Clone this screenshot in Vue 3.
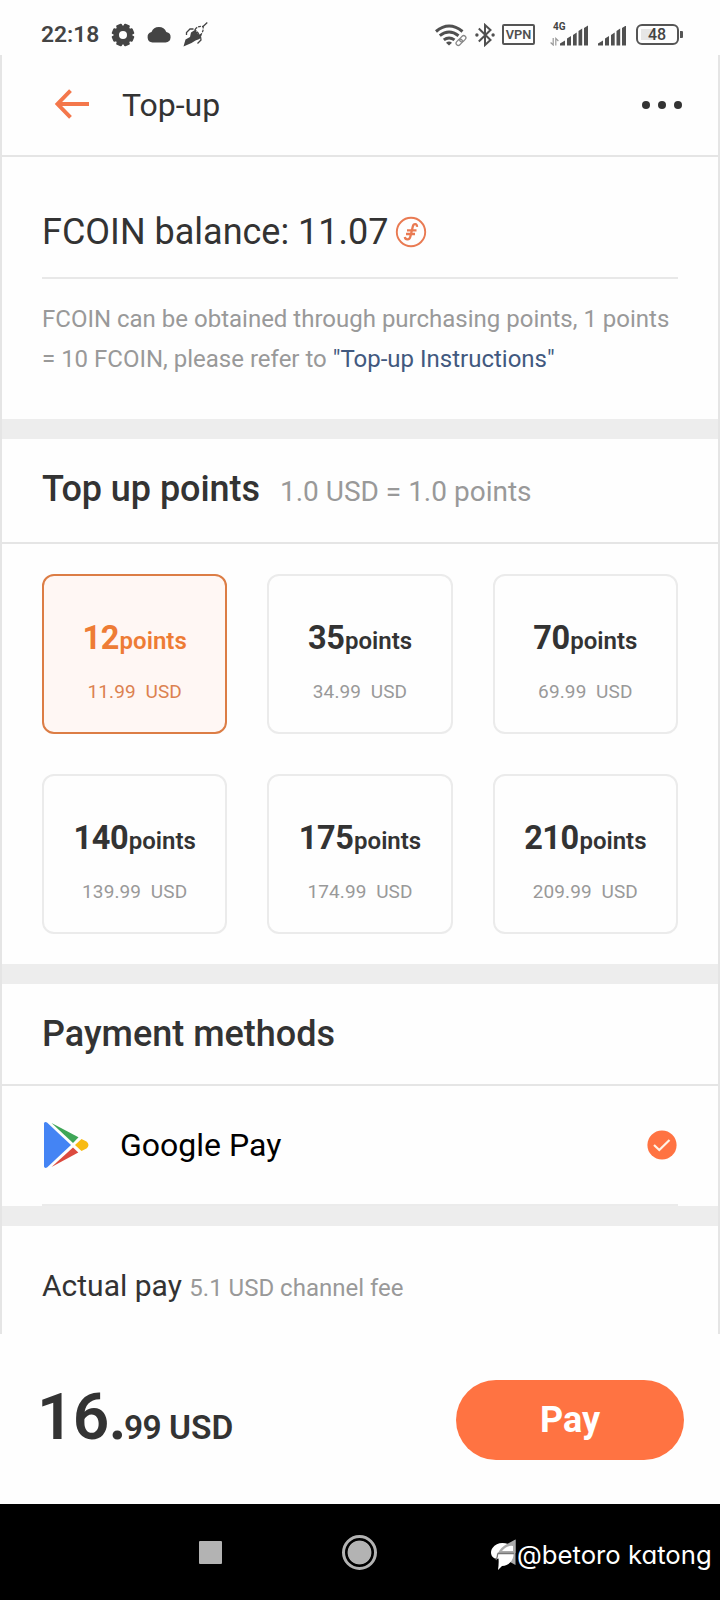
<script setup>
import { ref } from 'vue'

const packs = [
  { points: 12, price: '11.99' },
  { points: 35, price: '34.99' },
  { points: 70, price: '69.99' },
  { points: 140, price: '139.99' },
  { points: 175, price: '174.99' },
  { points: 210, price: '209.99' },
]
const selected = ref(12)
const teeth = [0, 45, 90, 135, 180, 225, 270, 315]
</script>

<template>
  <div class="screen">
    <div class="status">
      <span class="clock">22:18</span>
      <svg class="gear" width="24" height="24" viewBox="-12 -12 24 24">
        <rect v-for="a in teeth" :key="a" x="-3.1" y="-11.3" width="6.2" height="6" rx="1.2" :transform="`rotate(${a + 22.5})`" fill="#444" />
        <circle r="6.700" fill="none" stroke="#444" stroke-width="5.400" />
      </svg>
      <svg class="cloud" width="24" height="17" viewBox="0 0 24 17">
        <path d="M5.500 16.500a5.300 5.300 0 0 1-1-10.400A8 8 0 0 1 19.300 6a5.300 5.300 0 0 1-.8 10.500z" fill="#444" />
      </svg>
      <svg class="rocket" width="25" height="25" viewBox="0 0 25 25">
        <path d="M.5 24.500 2.500 17.500 7 15 8 10.500 12.500 7.500 15 12 19 12.500 16.500 17 12.500 18.500 8.500 21z" fill="#444" />
        <path d="M12 7.500Q15 3.500 20 4.500Q21 9 17.500 13L15.500 11.500z" fill="#fff" stroke="#444" stroke-width="1.200" stroke-dasharray="3 1" />
        <path d="M19.500 5 24.300.5M10.500 7H7L3.500 10.500V13M17.500 14.500 18 18 14.500 21.500" fill="none" stroke="#444" stroke-width="1.300" />
      </svg>
      <span class="spacer"></span>
      <svg class="wifi" width="33" height="24" viewBox="0 0 33 24">
        <g fill="none" stroke="#505050" stroke-width="3">
          <path d="M1 8.500Q14 -2.500 27.500 8.500" />
          <path d="M4.800 12.700Q14 5.300 23.500 12.700" />
          <path d="M8.800 16.900Q14 13 19.500 16.900" />
        </g>
        <path d="M11 19.700Q14 17.500 17 19.700L14 22.600z" fill="#505050" />
        <g transform="rotate(-45 26 17.500)" fill="none" stroke="#fff" stroke-width="3"><rect x="20" y="15.200" width="12" height="4.800" rx="2.400" /></g>
        <g transform="rotate(-45 26 17.500)" fill="none" stroke="#888" stroke-width="1.300">
          <rect x="20" y="15.300" width="7" height="4.400" rx="2.200" />
          <rect x="25" y="15.300" width="7" height="4.400" rx="2.200" />
        </g>
      </svg>
      <svg class="bt" width="20" height="24" viewBox="0 0 20 24">
        <path d="M3.800 5.500 15.500 17 10 22V2L15.500 7 3.800 18.500" fill="none" stroke="#505050" stroke-width="2" />
        <circle cx="1.900" cy="12" r="1.700" fill="#505050" /><circle cx="18.100" cy="12" r="1.700" fill="#505050" />
      </svg>
      <span class="vpn">VPN</span>
      <span class="mobile">
        <span class="net">4G</span>
        <svg width="38" height="23" viewBox="0 0 38 23">
          <path d="M3.200 15V22L.6 19.500M5.800 22.500V15.500L8.400 18" fill="none" stroke="#999" stroke-width="1.200" />
          <path d="M10 22.500V20.500L15 17.500V22.500zM17 15.500l4-2.400v9.400h-4zM23 12l3.700-2.400v12.900H23zM28.500 8l3.700-2.400v16.900h-3.700zM34 5l4-2.500v20h-4z" fill="#505050" />
        </svg>
      </span>
      <svg class="sig" width="28" height="20" viewBox="10 3 28 20">
        <path d="M10 22.500V20.500L15 17.500V22.500zM17 15.500l4-2.400v9.400h-4zM23 12l3.700-2.400v12.900H23zM28.500 8l3.700-2.400v16.900h-3.700zM34 5l4-2.500v20h-4z" fill="#505050" />
      </svg>
      <span class="battery"><span>48</span></span>
      <i class="nub"></i>
    </div>

    <main class="page">
      <header class="bar">
        <svg width="36" height="32" viewBox="0 0 36 32">
          <path d="M16.500 2.700 3.500 16 16.500 29.300M3.500 16H35" fill="none" stroke="#f4774b" stroke-width="3.900" />
        </svg>
        <h1>Top-up</h1>
        <svg class="more" width="40" height="8" viewBox="0 0 40 8" fill="#333">
          <circle cx="4" cy="4" r="4" /><circle cx="20" cy="4" r="4" /><circle cx="36" cy="4" r="4" />
        </svg>
      </header>

      <section class="balance">
        <div class="amount">
          <span>FCOIN balance: 11.07</span>
          <svg width="32" height="32" viewBox="0 0 32 32" fill="none" stroke="#e97a52">
            <circle cx="16" cy="16" r="14.200" stroke-width="1.900" />
            <path d="M22 10.800C22.300 7.500 18.600 7.200 17.800 10.500L15.400 20.500C14.600 24 10.500 24.500 9.800 21M12 14.300H21.500M11 18H20" stroke-width="2.300" />
          </svg>
        </div>
        <p>FCOIN can be obtained through purchasing points, 1 points</p>
        <p><span>= 10 FCOIN, please refer to&nbsp;</span><a>"Top-up Instructions"</a></p>
      </section>

      <section class="topup">
        <div class="head"><h2>Top up points</h2><small>1.0 USD = 1.0 points</small></div>
        <div class="grid">
          <button v-for="p in packs" :key="p.points" class="pack" :class="{ on: p.points === selected }" @click="selected = p.points">
            <span class="num"><b>{{ p.points }}</b>points</span>
            <span class="price">{{ p.price }}&nbsp; USD</span>
          </button>
        </div>
      </section>

      <section class="methods">
        <div class="head"><h2>Payment methods</h2></div>
        <div class="method">
          <svg width="46" height="48" viewBox="0 0 46 48">
            <path d="M1 2.500Q1.500 .3 4 1.500L28 24 4 46.500Q1.500 47.700 1 45.500z" fill="#4484f4" />
            <path d="M8.500 2 35.500 16.300 30 22z" fill="#3ea657" />
            <path d="M8.500 46 30 26.500 35.300 31.500z" fill="#dc4a3e" />
            <path d="M32 24 38.500 18 43.500 20.500Q47.500 24 43.500 27.500L38.500 30z" fill="#f8bb12" />
          </svg>
          <span>Google Pay</span>
          <svg class="check" width="30" height="30" viewBox="0 0 30 30">
            <circle cx="15" cy="15" r="14.600" fill="#ff7342" />
            <path d="M7 15 12.300 20 22.500 10" fill="none" stroke="#fff3e6" stroke-width="2.200" />
          </svg>
        </div>
      </section>

      <section class="actual"><span>Actual pay</span><small>5.1 USD channel fee</small></section>
    </main>

    <footer class="checkout">
      <div class="total"><b>16.</b><span class="cents">99</span><span class="unit">USD</span></div>
      <button class="pay">Pay</button>
    </footer>

    <nav class="nav">
      <i class="square"></i>
      <i class="home"></i>
      <div class="user">
        <svg width="27" height="32" viewBox="0 0 27 32">
          <path d="M25.500.5V26L20 23 10 13z" fill="#aaa" />
          <path d="M8.500 19.500C2 21-1 14 2.500 9 6 3.500 13 3 18 5L23 10C25 18 22 26 12 27L8 31Q9 24 8.500 19.500z" fill="#fff" />
          <path d="M17 5 25.500.5V14H8Q11 8 17 5z" fill="#aaa" />
          <path d="M12 12Q17 6 23 7V12z" fill="#fff" />
          <path d="M7.500 14.500H24M7.500 14.500Q8 17 6 21" fill="none" stroke="#777" stroke-width="1.300" />
        </svg>
        <span>@betoro katong</span>
      </div>
    </nav>
  </div>
</template>

<style>
body { background: #fff; }
</style>

<style scoped>
* { box-sizing: border-box; }
.screen { width: 720px; height: 1600px; display: flex; flex-direction: column; background: #fefefe; color: #333; font-family: Roboto, sans-serif; overflow: hidden; }
h1, h2, p { margin: 0; font-weight: 400; }
button { font-family: inherit; padding: 0; cursor: pointer; }
svg { display: block; flex: none; }
i { display: block; flex: none; }

.status { height: 55px; flex: none; display: flex; align-items: center; padding: 14px 37px 0 41px; color: #444; }
.clock { font-size: 22.800px; font-weight: 600; line-height: 41px; width: 58px; white-space: nowrap; }
.gear { margin-left: 12px; }
.cloud { margin-left: 12px; margin-top: -1px; }
.rocket { margin-left: 12px; }
.spacer { flex: 1; }
.bt { margin-left: 7px; }
.vpn { margin-left: 7px; width: 33px; height: 21px; border: 2px solid #555; border-radius: 2px; font-size: 12.800px; font-weight: 600; line-height: 18px; text-align: center; color: #505050; }
.mobile { position: relative; margin-left: 15px; }
.net { position: absolute; left: 3px; top: -1px; font-size: 10px; line-height: 10px; font-weight: 700; }
.sig { margin-left: 10px; margin-top: 2px; }
.battery { margin-left: 10px; width: 43px; height: 21px; border: 2.500px solid #555; border-radius: 6px; background: linear-gradient(#e6e6e6, #e6e6e6) 3px 3px / 14px 11px no-repeat padding-box; text-align: center; font-size: 16px; line-height: 18px; font-weight: 500; }
.battery span { display: block; margin-left: -1px; }
.nub { width: 3px; height: 7px; background: #555; margin: 0 0 0 1px; border-radius: 0 1px 1px 0; }

.page { height: 1279px; flex: none; border: solid #e5e5e5; border-width: 0 2px; }
.bar { height: 102px; border-bottom: 2px solid #e5e5e5; display: flex; align-items: center; padding: 0 36px 0 52px; }
.bar h1 { font-size: 32px; margin-left: 32px; flex: 1; }
.bar > svg:first-child { margin-top: -2px; }

.balance { height: 262px; padding: 0 40px; }
.amount { height: 122px; margin-bottom: 20px; padding-top: 30px; border-bottom: 2px solid #e8e8e8; display: flex; align-items: center; font-size: 36px; }
.amount svg { margin-left: 6px; }
.balance p { display: flex; font-size: 24px; line-height: 40px; color: #999; white-space: nowrap; }
.balance a { color: #42597f; }

.topup { border-top: 20px solid #ededed; }
.head { height: 105px; border-bottom: 2px solid #e5e5e5; padding: 0 40px; display: flex; align-items: baseline; line-height: 101px; }
.head h2 { font-size: 36px; font-weight: 500; }
.topup h2 { letter-spacing: -0.060px; }
.head small { font-size: 28px; color: #999; margin-left: 20px; }
.grid { display: grid; grid-template-columns: repeat(3, 1fr); grid-auto-rows: 160px; gap: 40px; padding: 30px 40px; }
.pack { display: flex; flex-direction: column; align-items: center; border: 2px solid #ebebeb; border-radius: 12px; background: transparent; color: #333; padding-top: 44px; }
.num { font-size: 24px; font-weight: 600; line-height: 36px; white-space: nowrap; }
.num b { font-size: 32.500px; font-weight: 700; letter-spacing: -0.400px; margin-right: 0.500px; }
.price { margin-top: 21px; font-size: 19px; line-height: 24px; letter-spacing: 0.120px; color: #999; white-space: nowrap; }
.pack.on { border-color: #dc7d45; background: #fff7f4; color: #ee7c35; }
.pack.on .price { color: #dc8150; }

.methods { border-top: 20px solid #ededed; }
.methods .head { height: 102px; line-height: 100px; }
.method { height: 120px; margin: 0 40px; border-bottom: 2px solid #ebebeb; display: flex; align-items: center; font-size: 32px; color: #000; }
.method svg:first-child { margin-left: 1px; }
.method span { margin-left: 31px; flex: 1; }
.check { margin-right: 1px; }

.actual { border-top: 20px solid #ededed; padding: 0 40px; display: flex; align-items: baseline; line-height: 120px; font-size: 30px; }
.actual small { font-size: 24px; color: #999; margin-left: 7.500px; }

.checkout { height: 170px; flex: none; display: flex; justify-content: space-between; align-items: center; padding: 2px 36px 0 37px; }
.total { display: flex; align-items: baseline; font-weight: 600; line-height: 76px; margin-top: 5px; font-size: 33.500px; }
.total b { font-size: 64px; font-weight: 600; width: 87px; letter-spacing: -0.800px; }
.cents { width: 45px; font-size: 33.500px; letter-spacing: -0.700px; }
.pay { width: 228px; height: 80px; border: 0; border-radius: 40px; background: #ff7342; color: #fff; font-size: 36px; font-weight: 700; }

.nav { height: 96px; flex: none; background: #000; display: flex; align-items: center; padding: 1px 7px 0 199px; }
.square { width: 23px; height: 23px; background: #b3b3b3; border-radius: 1px; }
.home { width: 35px; height: 35px; margin-left: 120px; border: 3px solid #b3b3b3; border-radius: 50%; background: radial-gradient(circle, #b3b3b3 11.500px, #000 12.300px) padding-box; }
.user { margin-left: 113px; display: flex; align-items: center; color: #fff; font-family: Inter, sans-serif; font-size: 25.700px; font-feature-settings: "cv11"; white-space: nowrap; padding-top: 4px; }
</style>
